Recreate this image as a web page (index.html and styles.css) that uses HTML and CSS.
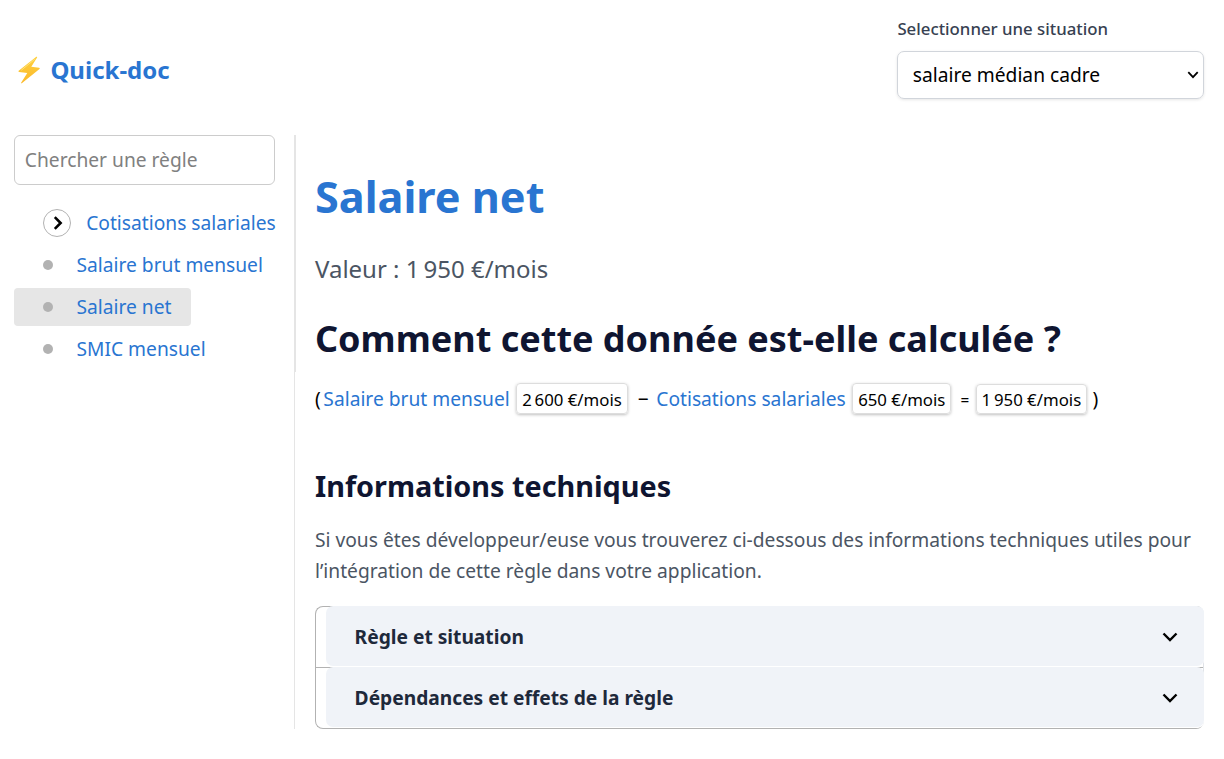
FILE: index.html
```html
<!DOCTYPE html>
<html lang="fr">
<head>
<meta charset="utf-8">
<title>Quick-doc</title>
<link rel="stylesheet" href="styles.css">
</head>
<body>
<header class="header">
  <a class="brand"><svg class="bolt" viewBox="0 0 22 28"><defs><linearGradient id="g" x1="0" y1="0" x2="0" y2="1"><stop offset="0" stop-color="#fed03e"/><stop offset="1" stop-color="#fbb92b"/></linearGradient></defs><path d="M18.300.8.700 14.700q-.9.900.4 1.200l8.200 1.200-6.200 9.600q-.3 1 .7.500L21.500 12.900q.8-.8-.4-1.100l-7.800-1.100 5.800-9.300q.2-1.100-.8-.6Z" fill="url(#g)"/><path d="M16.800 3.200 3.300 14.200" stroke="#ffe477" fill="none"/></svg><span>Quick-doc</span></a>
  <div class="situation">
    <div class="label">Selectionner une situation</div>
    <div class="select"><span>salaire médian cadre</span><svg class="caret" viewBox="0 0 12 8"><path d="M1.300 1.200 6 6.200 10.700 1.200"/></svg></div>
  </div>
</header>
<div class="layout">
  <aside class="sidebar">
    <nav class="nav">
      <div class="search">Chercher une règle</div>
      <div class="item parent"><span class="toggle"><svg viewBox="0 0 10 14"><path d="M1.800 1.200 7.600 7 1.800 12.800"/></svg></span><a>Cotisations salariales</a></div>
      <div class="item"><i class="dot"></i><a>Salaire brut mensuel</a></div>
      <div class="item active"><i class="dot"></i><a>Salaire net</a></div>
      <div class="item"><i class="dot"></i><a>SMIC mensuel</a></div>
    </nav>
  </aside>
  <main class="content">
    <h1>Salaire net</h1>
    <p class="value">Valeur : 1&#8239;950 €/mois</p>
    <h2>Comment cette donnée est-elle calculée ?</h2>
    <div class="formula"><span>(</span><a class="first">Salaire brut mensuel</a><span class="tag">2&#8239;600 €/mois</span><span class="minus">−</span><a>Cotisations salariales</a><span class="tag">650 €/mois</span><span class="equal">=</span><span class="tag result">1&#8239;950 €/mois</span><span class="close">)</span></div>
    <h3>Informations techniques</h3>
    <p class="info">Si vous êtes développeur/euse vous trouverez ci-dessous des informations techniques utiles pour l’intégration de cette règle dans votre application.</p>
    <div class="accordion">
      <div class="panel"><div class="button"><span>Règle et situation</span><svg viewBox="0 0 16 10"><path d="M1.500 1.500 8 8 14.500 1.500"/></svg></div></div>
      <div class="panel"><div class="button"><span>Dépendances et effets de la règle</span><svg viewBox="0 0 16 10"><path d="M1.500 1.500 8 8 14.500 1.500"/></svg></div></div>
    </div>
  </main>
</div>
</body>
</html>
```
FILE: styles.css
```css
* { box-sizing: border-box; }
body { margin: 0; background: #fff; font: 19.22px/31px "Noto Sans", sans-serif; color: #000; }
h1, h2, h3, p { margin: 0; white-space: nowrap; }
a { color: #2975d1; }
svg { display: block; fill: none; stroke: #000; }
.header { height: 135px; padding: 14px 20px 0 18px; display: flex; justify-content: space-between; }
.brand { display: flex; align-items: center; height: 112px; font-size: 24px; font-weight: 700; }
.brand span { padding-bottom: 2px; }
.bolt { width: 22px; height: 28px; margin: 0 10.4px 0 0; stroke: none; }
.situation { width: 307px; }
.label { height: 37px; padding-left: .4px; line-height: 30px; font-size: 16.8px; font-weight: 500; color: #374151; }
.select { height: 48px; padding: 0 4px 0 14.800px; display: flex; align-items: center; justify-content: space-between; border: 1px solid #d1d5db; border-radius: 7px; box-shadow: 0 1px 3px rgba(0,0,0,.1); }
.select span { padding-bottom: 2px; }
.caret { width: 12px; height: 8px; stroke-width: 1.8; }
.layout { display: flex; height: 594px; padding: 0 20px 0 14px; }
.sidebar { width: 281px; border-right: 1px solid #e5e5e5; }
.nav { width: 282px; height: 237px; border-right: 2px solid #e5e5e5; }
.search { width: 261px; height: 50px; padding: 8px 9.8px; margin-bottom: 19px; border: 1px solid #ccc; border-radius: 6px; line-height: 31px; color: #808080; }
.item { width: max-content; height: 38px; margin-bottom: 4px; padding: 0 19.400px 0 29px; display: flex; align-items: center; border-radius: 4px; white-space: nowrap; }
.item a { padding-bottom: 2px; }
.parent { padding-right: 0; }
.active { background: #e6e6e6; }
.dot { width: 10px; height: 10px; margin-right: 23.500px; border-radius: 50%; background: #b2b2b2; }
.toggle { width: 28px; height: 28px; margin-right: 15.200px; border: 1px solid #b2b2b2; border-radius: 50%; display: flex; align-items: center; justify-content: center; padding-left: 2px; }
.toggle svg { width: 10px; height: 14px; stroke-width: 2.6; }
.content { flex: 1; padding-left: 20px; }
h1 { height: 118px; padding-top: 34px; font-size: 43.2px; line-height: 56px; font-weight: 700; color: #2975d1; }
.value { height: 61px; font-size: 24px; color: #4b5563; }
h2 { height: 64px; font-size: 36px; line-height: 50px; font-weight: 700; color: #0f1531; }
.formula { height: 82px; padding-top: 5px; display: flex; align-items: flex-start; white-space: nowrap; }
.first { margin-left: 2.600px; }
.tag { height: 31px; padding: 0 5px; line-height: 32px; font-size: 16.8px; border: 1px solid #ddd; border-radius: 4px; box-shadow: 0 1px 3px rgba(0,0,0,.25); margin-left: 6.400px; }
.result { height: 30px; margin-top: 1px; line-height: 30px; }
.minus { margin: 0 7.500px 0 10px; }
.equal { margin: 2px 0 0 9px; font-size: 15.36px; }
.close { margin-left: 5.200px; }
h3 { height: 64px; padding-top: 6px; font-size: 28.8px; line-height: 40px; font-weight: 700; color: #0f1531; }
.info { height: 82px; white-space: normal; color: #4b5563; }
.accordion { height: 123px; border: 1px solid #b2b2b2; border-right-color: #dfe2e7; border-radius: 8px; }
.panel { height: 61px; padding-left: 10px; }
.panel + .panel { border-top: 1px solid #b2b2b2; }
.button { height: 60px; margin: -1px -1px 0 0; padding: 0 26.500px 0 28.600px; display: flex; align-items: center; justify-content: space-between; border-radius: 7px; background: #f0f3f8; box-shadow: 0 1px 0 #fff; font-size: 19.2px; font-weight: 700; color: #1e293b; }
.button svg { width: 16px; height: 10px; margin-top: 2px; stroke-width: 2.4; }
```
